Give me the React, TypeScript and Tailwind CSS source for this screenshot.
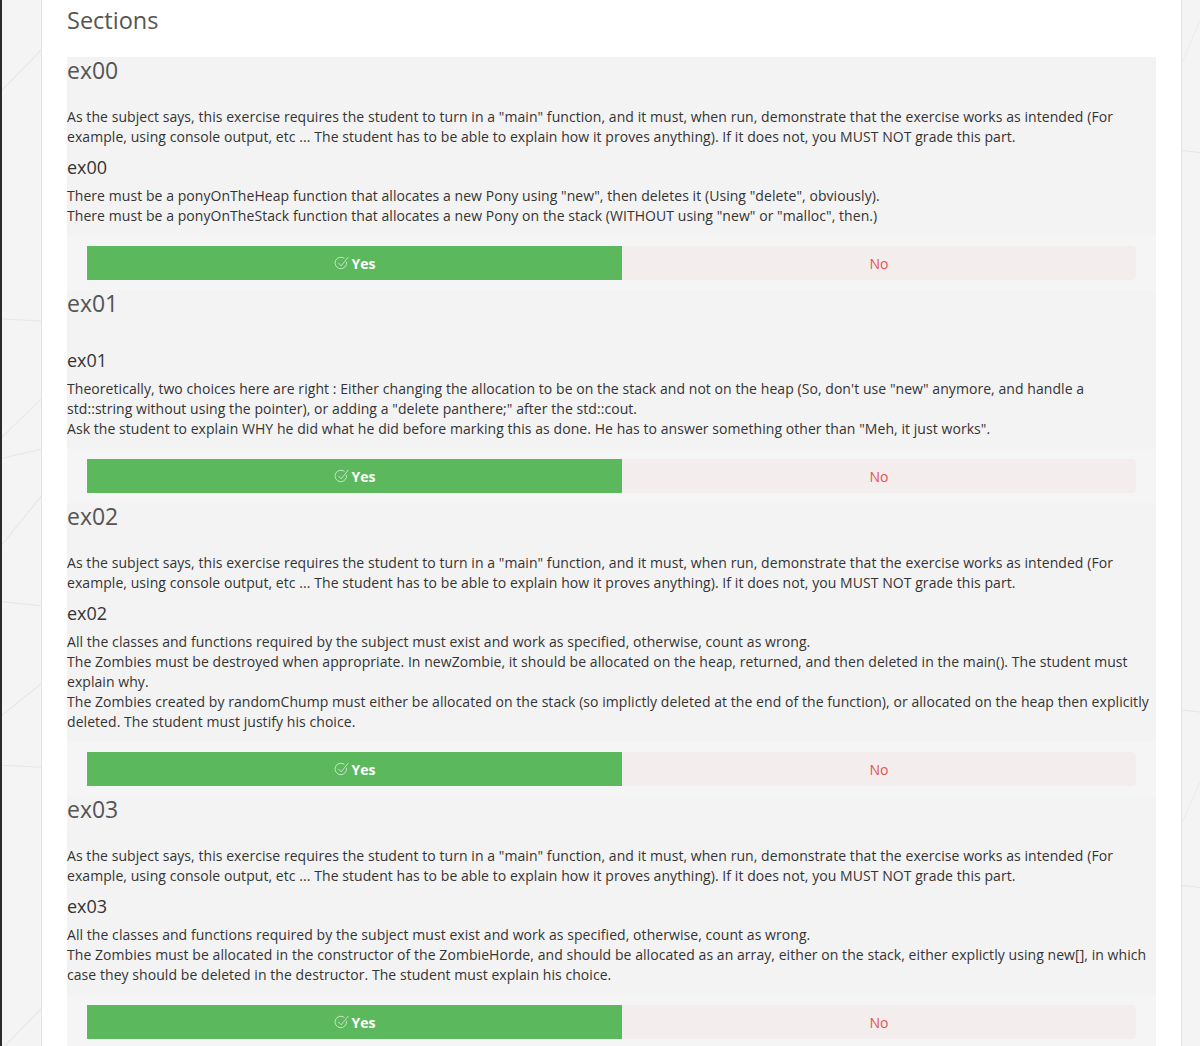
type Section = {
    title: string;
    intro: string;
    subtitle: string;
    lines: string[];
};

const INTRO =
    'As the subject says, this exercise requires the student to turn in a "main" function, and it must, when run, demonstrate that the exercise works as intended (For example, using console output, etc ... The student has to be able to explain how it proves anything). If it does not, you MUST NOT grade this part.';

const sections: Section[] = [
    {
        title: 'ex00',
        intro: INTRO,
        subtitle: 'ex00',
        lines: [
            'There must be a ponyOnTheHeap function that allocates a new Pony using "new", then deletes it (Using "delete", obviously).',
            'There must be a ponyOnTheStack function that allocates a new Pony on the stack (WITHOUT using "new" or "malloc", then.)',
        ],
    },
    {
        title: 'ex01',
        intro: '',
        subtitle: 'ex01',
        lines: [
            'Theoretically, two choices here are right : Either changing the allocation to be on the stack and not on the heap (So, don\'t use "new" anymore, and handle a std::string without using the pointer), or adding a "delete panthere;" after the std::cout.',
            'Ask the student to explain WHY he did what he did before marking this as done. He has to answer something other than "Meh, it just works".',
        ],
    },
    {
        title: 'ex02',
        intro: INTRO,
        subtitle: 'ex02',
        lines: [
            'All the classes and functions required by the subject must exist and work as specified, otherwise, count as wrong.',
            'The Zombies must be destroyed when appropriate. In newZombie, it should be allocated on the heap, returned, and then deleted in the main(). The student must explain why.',
            'The Zombies created by randomChump must either be allocated on the stack (so implictly deleted at the end of the function), or allocated on the heap then explicitly deleted. The student must justify his choice.',
        ],
    },
    {
        title: 'ex03',
        intro: INTRO,
        subtitle: 'ex03',
        lines: [
            'All the classes and functions required by the subject must exist and work as specified, otherwise, count as wrong.',
            'The Zombies must be allocated in the constructor of the ZombieHorde, and should be allocated as an array, either on the stack, either explictly using new[], in which case they should be deleted in the destructor. The student must explain his choice.',
        ],
    },
];

const CheckIcon = () => (
    <svg width="16" height="16" viewBox="0 0 16 16" fill="none" aria-hidden="true">
        <path d="M12.6 7.2 A5.8 5.8 0 1 1 10.2 3.2" stroke="rgba(255,255,255,0.7)" strokeWidth="0.9" strokeLinecap="round" />
        <path d="M4.6 8.2 L7.2 10.8 L14.2 2.2" stroke="rgba(255,255,255,0.7)" strokeWidth="0.9" strokeLinecap="round" strokeLinejoin="round" />
    </svg>
);

const BgLines = ({ side }: { side: 'left' | 'right' }) => (
    <svg className="absolute inset-0 w-full h-full" preserveAspectRatio="none" viewBox="0 0 40 1046" aria-hidden="true">
        {side === 'left' ? (
            <g stroke="#e6e6e6" strokeWidth="1" fill="none">
                <line x1="0" y1="90" x2="40" y2="50" />
                <line x1="0" y1="318" x2="40" y2="320" />
                <line x1="0" y1="436" x2="40" y2="398" />
                <line x1="0" y1="457" x2="40" y2="448" />
                <line x1="0" y1="543" x2="40" y2="495" />
                <line x1="0" y1="600" x2="40" y2="604" />
                <line x1="0" y1="713" x2="40" y2="682" />
                <line x1="0" y1="763" x2="40" y2="765" />
                <line x1="0" y1="1046" x2="40" y2="1006" />
            </g>
        ) : (
            <g stroke="#e6e6e6" strokeWidth="1" fill="none">
                <line x1="0" y1="62" x2="40" y2="20" />
                <line x1="0" y1="150" x2="40" y2="152" />
                <line x1="0" y1="708" x2="40" y2="710" />
                <line x1="0" y1="820" x2="40" y2="780" />
                <line x1="0" y1="883" x2="40" y2="885" />
            </g>
        )}
    </svg>
);

const Buttons = () => (
    <div className="mt-[10px] bg-[#f5f5f5] py-[10px] px-[20px]">
        <div className="flex h-[34px] text-[14px]">
            <button className="w-[535px] bg-[#5cb85c] text-white font-bold flex items-center justify-center gap-[2px]">
                <CheckIcon />
                <span>Yes</span>
            </button>
            <button className="flex-1 bg-[#f3eded] text-[#e5534b] rounded-r-[4px] flex items-center justify-center">
                No
            </button>
        </div>
    </div>
);

export default function App() {
    return (
        <div className="flex min-h-[1046px] bg-[#f4f4f4] font-['Open_Sans',sans-serif] text-[#333]">
            <div className="relative w-[41px] shrink-0 border-l-2 border-[#2a2a2a]">
                <BgLines side="left" />
            </div>
            <div className="w-[1141px] shrink-0 bg-white border-x border-[#e3e3e3] px-[25px] pt-[7px]">
                <h2 className="text-[23.5px] leading-[26px] text-[#555]">Sections</h2>
                <div className="mt-[24px]">
                    {sections.map((s) => (
                        <div key={s.title} className="bg-[#f3f3f3]">
                            <h3 className="text-[23px] leading-[26px] text-[#555]">{s.title}</h3>
                            <div className="flex flex-col pr-[5px] tracking-[0.06px] text-[14px] leading-[20px]">
                                <p className="mt-[24px]">{s.intro}</p>
                                <h4 className="mt-[10px] text-[18px] leading-[20px] tracking-normal">{s.subtitle}</h4>
                                <div className="mt-[9px]">
                                    {s.lines.map((l, i) => (
                                        <p key={i}>{l}</p>
                                    ))}
                                </div>
                            </div>
                            <Buttons />
                        </div>
                    ))}
                </div>
            </div>
            <div className="relative flex-1">
                <BgLines side="right" />
            </div>
        </div>
    );
}
